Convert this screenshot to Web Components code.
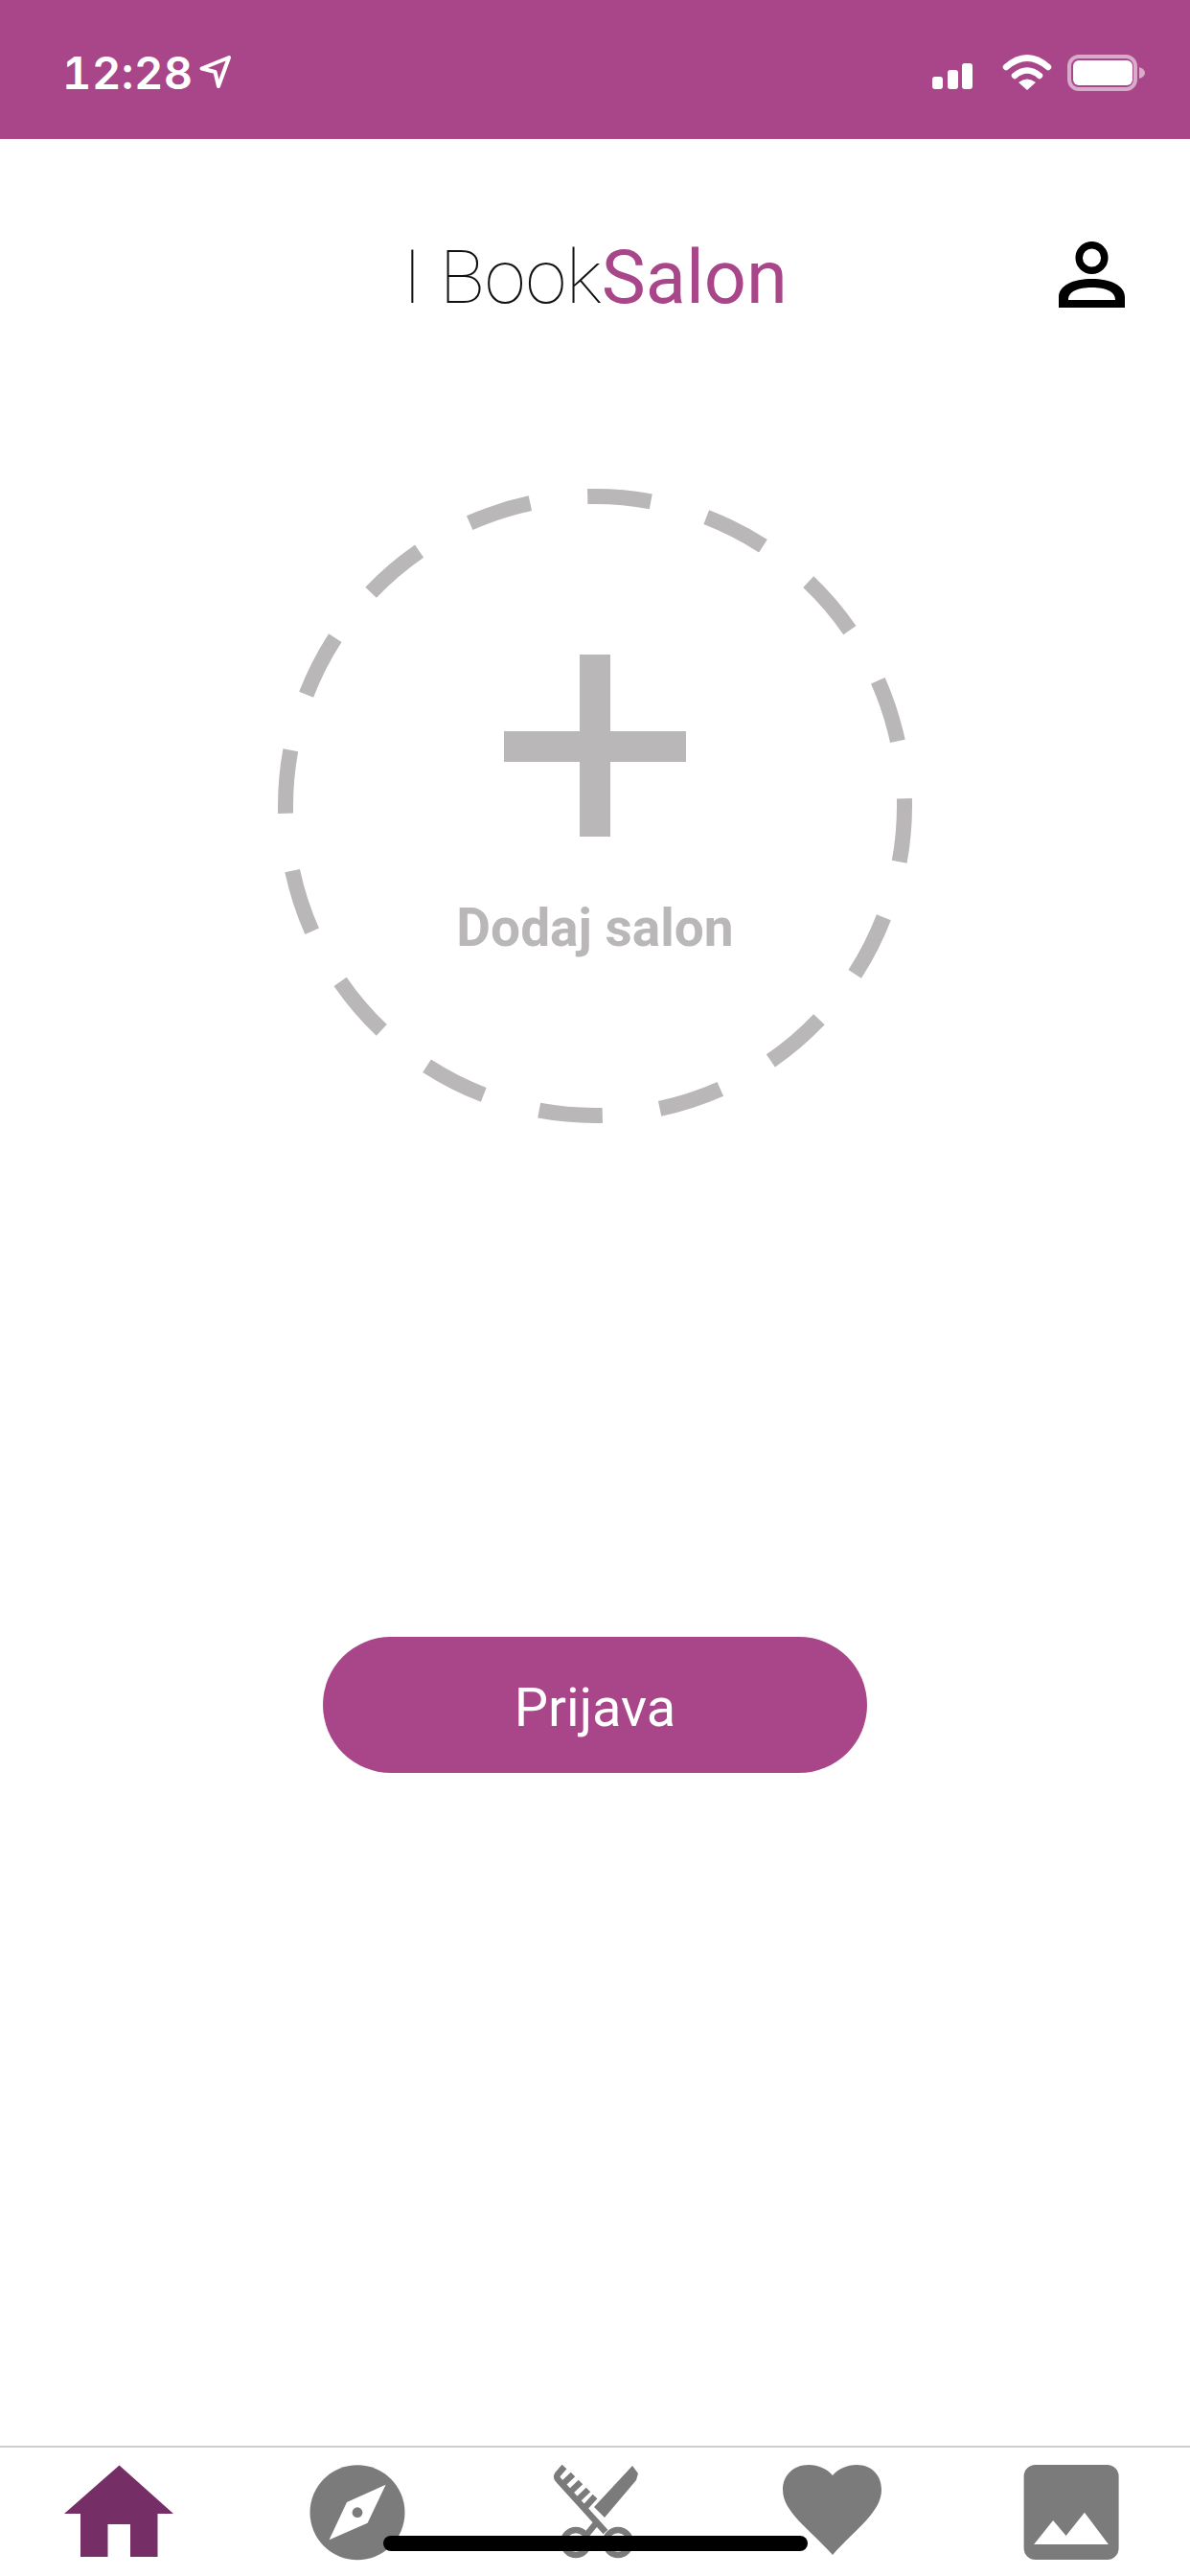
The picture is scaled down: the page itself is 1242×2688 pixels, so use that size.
<!DOCTYPE html>
<html lang="hr">
<head>
<meta charset="utf-8">
<title>BookSalon</title>
<style>
    html, body { margin: 0; padding: 0; background: #fff; }
    body { font-family: Roboto, "Liberation Sans", sans-serif; }
</style>
</head>
<body>
<salon-app>
    <status-bar slot="top" time="12:28"></status-bar>
    <app-header slot="top">
        <span slot="light">I Book</span><span slot="strong">Salon</span>
    </app-header>
    <add-salon label="Dodaj salon"></add-salon>
    <login-button>Prijava</login-button>
    <tab-bar slot="bottom"></tab-bar>
</salon-app>

<script>
class SalonApp extends HTMLElement {
    constructor() {
        super();
        this.attachShadow({mode: 'open'});
        this.shadowRoot.innerHTML = `
            <style>
                :host {
                    display: flex;
                    flex-direction: column;
                    width: 1242px;
                    height: 2688px;
                    overflow: hidden;
                    background: #fff;
                }
                main {
                    flex: 1;
                    display: flex;
                    flex-direction: column;
                    align-items: center;
                }
            </style>
            <slot name="top"></slot>
            <main><slot></slot></main>
            <slot name="bottom"></slot>
        `;
    }
}

class StatusBar extends HTMLElement {
    constructor() {
        super();
        this.attachShadow({mode: 'open'});
        this.shadowRoot.innerHTML = `
            <style>
                :host {
                    display: flex;
                    justify-content: space-between;
                    align-items: flex-start;
                    height: 145px;
                    box-sizing: border-box;
                    padding: 57px 47px 0 65px;
                    background: #a94589;
                    color: #fff;
                }
                .left { display: flex; align-items: flex-start; gap: 6px; }
                .time {
                    font: 600 47px/38px Inter, Roboto, sans-serif;
                    font-variant-numeric: tabular-nums;
                    letter-spacing: 0.5px;
                }
                svg { display: block; }
            </style>
            <div class="left">
                <span class="time"></span>
                <svg width="34" height="36" viewBox="0 0 34 36">
                    <path d="M2.5 14.5 L31 3 L20 33 L16.5 18 Z" fill="none" stroke="#fff" stroke-width="4" stroke-linejoin="round"/>
                </svg>
            </div>
            <svg width="222" height="38" viewBox="973 57 222 38">
                <rect x="973" y="80" width="11" height="13" rx="3" fill="#fff"/>
                <rect x="989" y="73" width="11" height="20" rx="3" fill="#fff"/>
                <rect x="1004" y="66" width="11" height="27" rx="3" fill="#fff"/>
                <path d="M1050 70 Q1072 51 1094 70" fill="none" stroke="#fff" stroke-width="6.5" stroke-linecap="round"/>
                <path d="M1059 79 Q1072 68 1085 79" fill="none" stroke="#fff" stroke-width="6.5" stroke-linecap="round"/>
                <path d="M1063 86 Q1072 79 1081 86 L1072 94 Z" fill="#fff"/>
                <rect x="1116" y="59" width="69" height="34" rx="10" fill="none" stroke="#fff" stroke-opacity="0.55" stroke-width="4"/>
                <rect x="1120" y="63" width="62" height="26" rx="6" fill="#fff"/>
                <path d="M1189 70 Q1195 72 1195 76 Q1195 80 1189 82 Z" fill="#fff" fill-opacity="0.55"/>
            </svg>
        `;
        this.shadowRoot.querySelector('.time').textContent = this.getAttribute('time');
    }
}

class AppHeader extends HTMLElement {
    constructor() {
        super();
        this.attachShadow({mode: 'open'});
        this.shadowRoot.innerHTML = `
            <style>
                :host {
                    display: grid;
                    grid-template-columns: 1fr auto 1fr;
                    align-items: start;
                    padding-top: 100px;
                }
                .title {
                    grid-column: 2;
                    font: 400 77.5px/90px Roboto, sans-serif;
                    white-space: nowrap;
                }
                ::slotted([slot="light"]) { font-weight: 100; color: #111; }
                ::slotted([slot="strong"]) { color: #a94589; }
                svg { grid-column: 3; justify-self: end; display: block; margin: 7px 68px 0 0; }
            </style>
            <div class="title"><slot name="light"></slot><slot name="strong"></slot></div>
            <svg width="69" height="69" viewBox="1105 252 69 69" fill="#000">
                <circle cx="1139.5" cy="269" r="13.3" fill="none" stroke="#000" stroke-width="7.5"/>
                <path fill-rule="evenodd" d="M1105 321 V310 C1105 298 1120 291 1139.5 291 C1159 291 1174 298 1174 310 V321 Z M1115 313 H1164 C1164 304 1154 300 1139.5 300 C1125 300 1115 304 1115 313 Z"/>
            </svg>
        `;
    }
}

class AddSalon extends HTMLElement {
    constructor() {
        super();
        this.attachShadow({mode: 'open'});
        this.shadowRoot.innerHTML = `
            <style>
                :host {
                    display: grid;
                    width: 662px;
                    height: 662px;
                    margin-top: 175px;
                    color: #b9b7b8;
                }
                .ring, .content { grid-area: 1 / 1; }
                .ring { display: block; }
                .content {
                    display: flex;
                    flex-direction: column;
                    align-items: center;
                    padding-top: 173px;
                }
                .plus { display: block; }
                .label {
                    margin-top: 63px;
                    font: 700 55px/64px Roboto, sans-serif;
                }
            </style>
            <svg class="ring" width="662" height="662" viewBox="0 0 662 662">
                <circle cx="331" cy="331" r="323" fill="none" stroke="currentColor" stroke-width="16"
                    pathLength="360" stroke-dasharray="11.8 10.7" stroke-dashoffset="1.4"/>
            </svg>
            <div class="content">
                <svg class="plus" width="190" height="190" viewBox="0 0 190 190" fill="currentColor">
                    <rect x="79" y="0" width="32" height="190"/>
                    <rect x="0" y="80" width="190" height="32"/>
                </svg>
                <span class="label"></span>
            </div>
        `;
        this.shadowRoot.querySelector('.label').textContent = this.getAttribute('label');
    }
}

class LoginButton extends HTMLElement {
    constructor() {
        super();
        this.attachShadow({mode: 'open'});
        this.shadowRoot.innerHTML = `
            <style>
                :host {
                    display: flex;
                    align-items: center;
                    justify-content: center;
                    width: 568px;
                    height: 142px;
                    box-sizing: border-box;
                    padding-top: 5px;
                    margin-top: 536px;
                    border-radius: 71px;
                    background: #a94589;
                    color: #fff;
                    font: 400 56px/1 Roboto, sans-serif;
                }
            </style>
            <slot></slot>
        `;
    }
}

class TabBar extends HTMLElement {
    constructor() {
        super();
        this.attachShadow({mode: 'open'});
        this.shadowRoot.innerHTML = `
            <style>
                :host {
                    position: relative;
                    display: grid;
                    grid-template-columns: repeat(5, 1fr);
                    justify-items: center;
                    align-items: start;
                    height: 136px;
                    box-sizing: border-box;
                    padding-top: 17px;
                    border-top: 2px solid #cfcfcf;
                }
                svg { display: block; }
                .indicator {
                    position: absolute;
                    left: 400px;
                    top: 92px;
                    width: 443px;
                    height: 16px;
                    border-radius: 8px;
                    background: #000;
                }
            </style>
            <svg width="120" height="104" viewBox="64 2570 120 104">
                <path fill="#762e66" d="M124.5 2571.5 L181 2622 H164.5 V2667 H136 V2633 H112.5 V2667 H84 V2622 H67 Z"/>
            </svg>
            <svg width="120" height="104" viewBox="312.7 2570 120 104">
                <circle cx="372.7" cy="2620.7" r="49.5" fill="#7b7b7b"/>
                <path fill="#fff" d="M402.3 2591.7 L383.3 2631.7 L343.3 2649.3 L361.7 2610 Z"/>
                <circle cx="372.7" cy="2620.7" r="5.4" fill="#7b7b7b"/>
            </svg>
            <svg width="120" height="104" viewBox="0 10 120 104">
                <g fill="none" stroke="#7b7b7b" stroke-width="6.5">
                    <path d="M28 13 L21 21 Q19 24 22 27 L71 81 M37 21 L26.5 31 M45 29 L34.5 39 M53 37 L42.5 47 M60 44 L50 55"/>
                    <path d="M52 83 L61 72"/>
                    <circle cx="40" cy="92" r="13"/>
                    <circle cx="84" cy="92" r="13"/>
                </g>
                <path fill="#7b7b7b" d="M99 12 L105 20 L103 27 L70 66 L59 55 Z"/>
            </svg>
            <svg width="120" height="104" viewBox="810 2570 120 104">
                <path fill="#7b7b7b" d="M870 2665 C845 2637 818 2620 818 2597 C818 2582 829 2571 845 2571 C855 2571 864 2575 870 2582 C876 2575 885 2571 895 2571 C911 2571 921 2582 921 2597 C921 2620 895 2637 870 2665 Z"/>
            </svg>
            <svg width="120" height="104" viewBox="1058.4 2570 120 104">
                <rect x="1069" y="2571" width="99" height="99" rx="12" fill="#7b7b7b"/>
                <path fill="#fff" d="M1079.5 2654 L1099.5 2629 L1113 2645 L1132.3 2620.7 L1157.3 2654 Z"/>
            </svg>
            <div class="indicator"></div>
        `;
    }
}

customElements.define('salon-app', SalonApp);
customElements.define('status-bar', StatusBar);
customElements.define('app-header', AppHeader);
customElements.define('add-salon', AddSalon);
customElements.define('login-button', LoginButton);
customElements.define('tab-bar', TabBar);
</script>
</body>
</html>
